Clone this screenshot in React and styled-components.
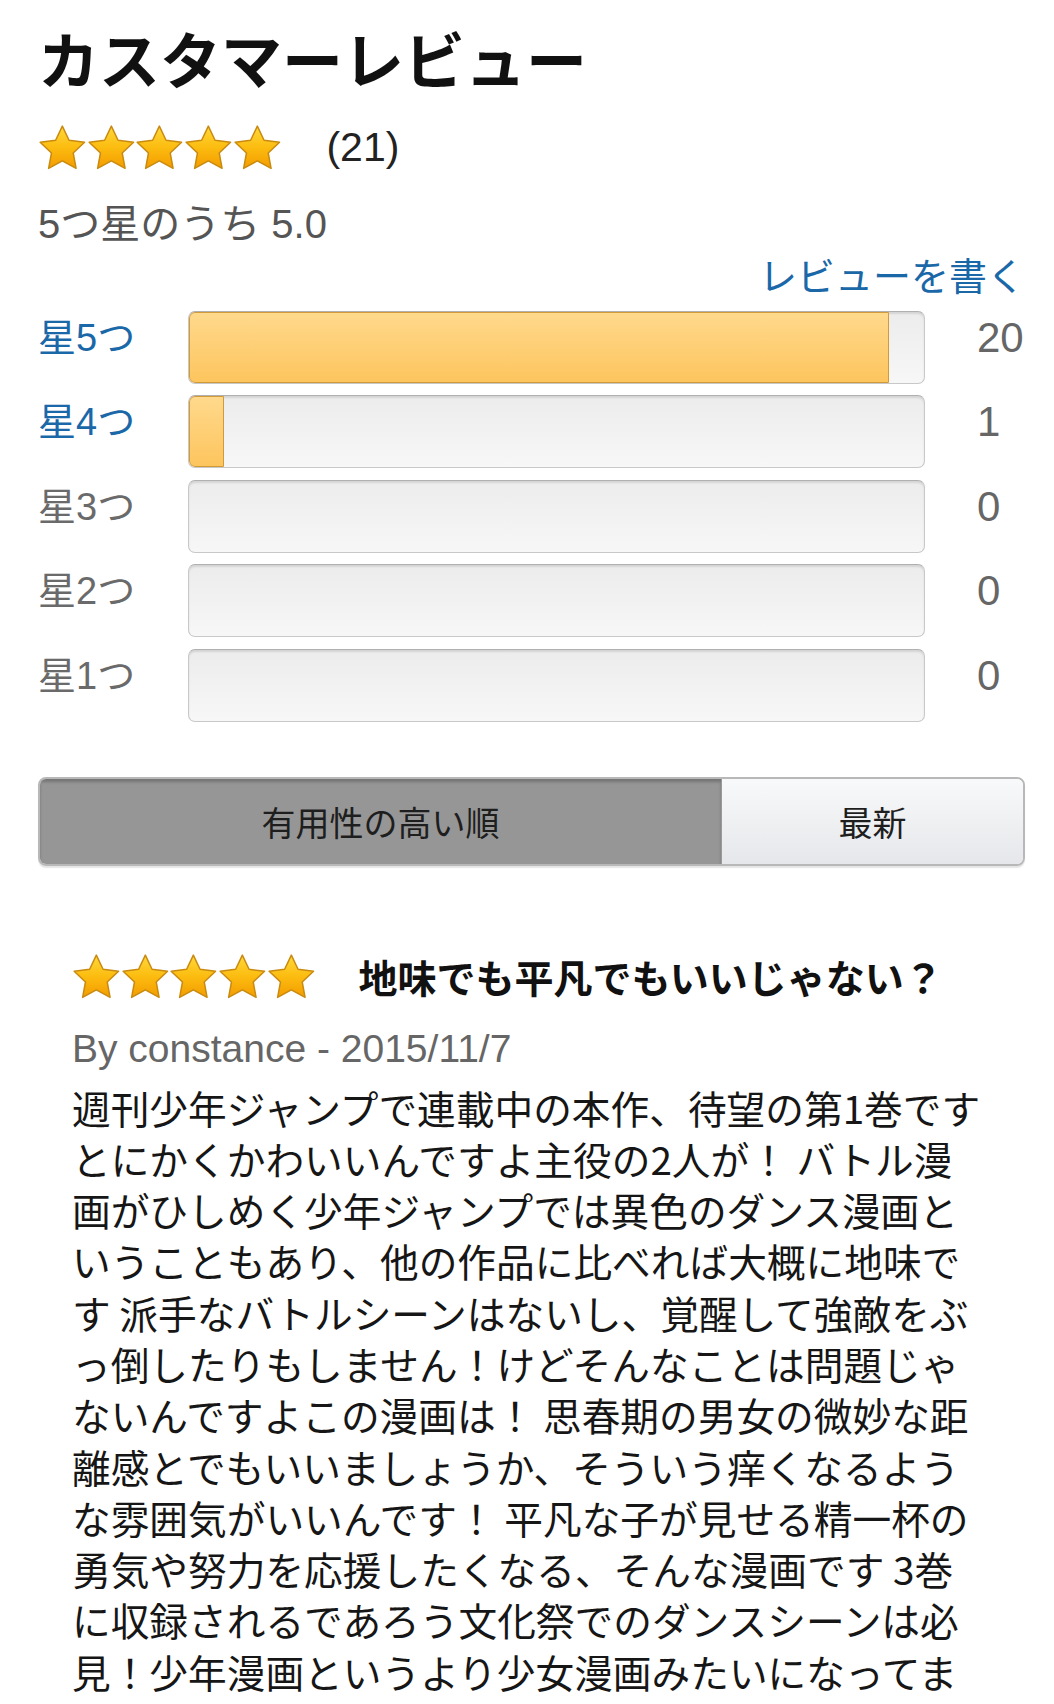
import React from "react";
import styled, { createGlobalStyle } from "styled-components";

const GlobalStyle = createGlobalStyle`
  html, body {
    margin: 0;
    padding: 0;
    background: #fff;
  }
  body {
    font-family: "Noto Sans CJK JP", "Noto Sans", sans-serif;
    color: #111;
  }
`;

const latin = `"Liberation Sans", "Noto Sans CJK JP", sans-serif`;

const Page = styled.div`
  padding: 22px 29px 0 38px;
  width: 1054px;
  box-sizing: border-box;
  overflow: hidden;
`;

const Title = styled.h1`
  margin: 0;
  font-size: 61px;
  line-height: 72px;
  font-weight: 700;
  color: #111;
`;

const RatingRow = styled.div`
  display: flex;
  align-items: center;
  margin-top: 30px;
  height: 46px;
`;

const Stars = styled.div`
  display: flex;
`;

const Count = styled.span`
  margin-left: 45px;
  font-family: ${latin};
  font-size: 41px;
  line-height: 46px;
  color: #222;
`;

const Average = styled.div`
  margin-top: 31px;
  font-family: ${latin};
  font-size: 40px;
  line-height: 46px;
  color: #555;
`;

const WriteLink = styled.a`
  display: block;
  margin-top: 4px;
  text-align: right;
  font-size: 38px;
  line-height: 46px;
  color: #1a68a8;
  text-decoration: none;
`;

const Histogram = styled.div`
  display: flex;
  flex-direction: column;
  gap: 11.5px;
  margin-top: 13.5px;
`;

const BarRow = styled.div`
  display: grid;
  grid-template-columns: 150px 737px 1fr;
  align-items: start;
  height: 73px;
`;

const StarLabel = styled.span`
  padding-top: 4px;
  font-family: ${latin};
  font-size: 38px;
  line-height: 46px;
  color: ${(p) => (p.$active ? "#1a68a8" : "#6a6a6a")};
`;

const Track = styled.div`
  height: 73px;
  box-sizing: border-box;
  border: 1.5px solid #c8c8c8;
  border-top-color: #b0b0b0;
  border-radius: 7px;
  background: linear-gradient(#ececec, #f7f7f7);
  box-shadow: inset 0 2px 2px rgba(0, 0, 0, 0.1);
  overflow: hidden;
`;

const Fill = styled.div`
  height: 100%;
  box-sizing: border-box;
  border: 1.5px solid #d29a38;
  border-radius: 6px 0 0 6px;
  background: linear-gradient(#ffd98c, #fdc55e);
`;

const BarCount = styled.span`
  padding-top: 2px;
  padding-left: 52px;
  font-family: ${latin};
  font-size: 42px;
  line-height: 50px;
  color: #666;
`;

const SortGroup = styled.div`
  display: grid;
  grid-template-columns: 681px 1fr;
  margin-top: 55px;
  height: 89px;
  box-sizing: border-box;
  border: 2px solid #b8b8b8;
  border-radius: 8px;
  overflow: hidden;
  box-shadow: 0 2px 1px rgba(0, 0, 0, 0.1);
`;

const SortButton = styled.button`
  border: 0;
  margin: 0;
  padding: 0;
  font-family: inherit;
  font-size: 34px;
  color: #1e1e1e;
  background: ${(p) =>
    p.$selected ? "#969696" : "linear-gradient(#f8f9fa, #e5e7ea)"};
  box-shadow: ${(p) =>
    p.$selected ? "inset 0 3px 3px rgba(0,0,0,0.22)" : "none"};
  border-left: ${(p) => (p.$selected ? "0" : "1.5px solid #9a9a9a")};
`;

const Review = styled.div`
  margin-top: 86px;
  padding-left: 34px;
`;

const ReviewHead = styled.div`
  display: flex;
  align-items: center;
  height: 48px;
`;

const ReviewTitle = styled.h3`
  margin: 0 0 0 43px;
  font-size: 39px;
  line-height: 48px;
  font-weight: 700;
  color: #111;
`;

const Byline = styled.div`
  margin-top: 26px;
  font-family: ${latin};
  font-size: 39px;
  line-height: 46px;
  color: #666;
`;

const Body = styled.p`
  margin: 10px 0 0;
  font-size: 38.7px;
  line-height: 51.3px;
  color: #161616;
`;

const Line = styled.span`
  display: block;
  white-space: nowrap;
`;

const Star = () => (
  <svg width="48.7" height="46" viewBox="0 0 49 46">
    <defs>
      <linearGradient id="starGrad" x1="0" y1="0" x2="0" y2="1">
        <stop offset="0" stopColor="#ffd93a" />
        <stop offset="0.5" stopColor="#fcbc10" />
        <stop offset="1" stopColor="#f39c00" />
      </linearGradient>
    </defs>
    <path
      d="M24.5 2 L31.26 16.2 L46.85 18.24 L35.44 29.05 L38.32 44.51 L24.5 37 L10.68 44.51 L13.56 29.05 L2.15 18.24 L17.74 16.2 Z"
      fill="url(#starGrad)"
      stroke="#c98a10"
      strokeWidth="1.5"
      strokeLinejoin="round"
    />
  </svg>
);

const FiveStars = () => (
  <Stars>
    {[0, 1, 2, 3, 4].map((i) => (
      <Star key={i} />
    ))}
  </Stars>
);

const histogram = [
  { label: "星5つ", count: 20 },
  { label: "星4つ", count: 1 },
  { label: "星3つ", count: 0 },
  { label: "星2つ", count: 0 },
  { label: "星1つ", count: 0 },
];
const total = 21;

const bodyLines = [
  "週刊少年ジャンプで連載中の本作、待望の第1巻です",
  "とにかくかわいいんですよ主役の2人が！ バトル漫",
  "画がひしめく少年ジャンプでは異色のダンス漫画と",
  "いうこともあり、他の作品に比べれば大概に地味で",
  "す 派手なバトルシーンはないし、覚醒して強敵をぶ",
  "っ倒したりもしません！けどそんなことは問題じゃ",
  "ないんですよこの漫画は！ 思春期の男女の微妙な距",
  "離感とでもいいましょうか、そういう痒くなるよう",
  "な雰囲気がいいんです！ 平凡な子が見せる精一杯の",
  "勇気や努力を応援したくなる、そんな漫画です 3巻",
  "に収録されるであろう文化祭でのダンスシーンは必",
  "見！少年漫画というより少女漫画みたいになってま",
];

export default function App() {
  return (
    <Page>
      <GlobalStyle />
      <Title>カスタマーレビュー</Title>
      <RatingRow>
        <FiveStars />
        <Count>(21)</Count>
      </RatingRow>
      <Average>5つ星のうち 5.0</Average>
      <WriteLink href="#">レビューを書く</WriteLink>
      <Histogram>
        {histogram.map((row) => (
          <BarRow key={row.label}>
            <StarLabel $active={row.count > 0}>{row.label}</StarLabel>
            <Track>
              {row.count > 0 && (
                <Fill style={{ width: `${(row.count / total) * 100}%` }} />
              )}
            </Track>
            <BarCount>{row.count}</BarCount>
          </BarRow>
        ))}
      </Histogram>
      <SortGroup>
        <SortButton $selected>有用性の高い順</SortButton>
        <SortButton>最新</SortButton>
      </SortGroup>
      <Review>
        <ReviewHead>
          <FiveStars />
          <ReviewTitle>地味でも平凡でもいいじゃない？</ReviewTitle>
        </ReviewHead>
        <Byline>By constance - 2015/11/7</Byline>
        <Body>
          {bodyLines.map((l, i) => (
            <Line key={i}>{l}</Line>
          ))}
        </Body>
      </Review>
    </Page>
  );
}
